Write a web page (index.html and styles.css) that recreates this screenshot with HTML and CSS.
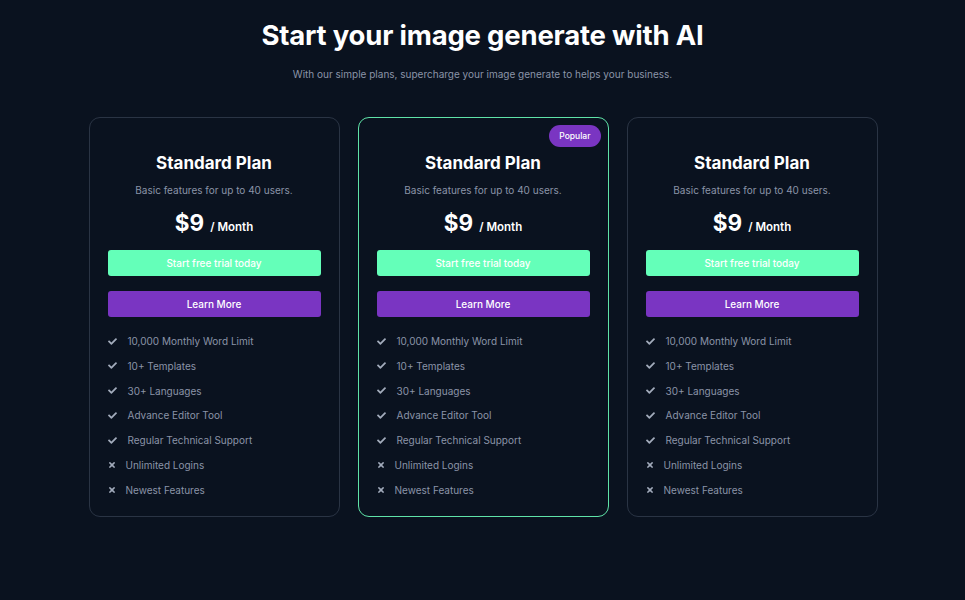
FILE: index.html
```html
<!DOCTYPE html>
<html lang="en">
<head>
<meta charset="utf-8">
<link rel="stylesheet" href="styles.css">
</head>
<body>
<section class="pricing">
  <h1 class="title">Start your image generate with AI</h1>
  <p class="subtitle">With our simple plans, supercharge your image generate to helps your business.</p>
  <div class="cards">
    <div class="card">
      <h2 class="plan">Standard Plan</h2>
      <p class="desc">Basic features for up to 40 users.</p>
      <div class="price"><span class="amount">$9</span><span class="per">/ Month</span></div>
      <button class="btn btn-trial">Start free trial today</button>
      <button class="btn btn-learn">Learn More</button>
      <ul class="features">
        <li class="yes"><svg viewBox="0 72 512 370"><path d="M173.9 439.4l-166.4-166.4c-10-10-10-26.2 0-36.2l36.2-36.2c10-10 26.2-10 36.2 0L192 312.7 432.1 72.6c10-10 26.2-10 36.2 0l36.2 36.2c10 10 10 26.2 0 36.2l-294.4 294.4c-10 10-26.2 10-36.2 0z"/></svg>10,000 Monthly Word Limit</li>
        <li class="yes"><svg viewBox="0 72 512 370"><path d="M173.9 439.4l-166.4-166.4c-10-10-10-26.2 0-36.2l36.2-36.2c10-10 26.2-10 36.2 0L192 312.7 432.1 72.6c10-10 26.2-10 36.2 0l36.2 36.2c10 10 10 26.2 0 36.2l-294.4 294.4c-10 10-26.2 10-36.2 0z"/></svg>10+ Templates</li>
        <li class="yes"><svg viewBox="0 72 512 370"><path d="M173.9 439.4l-166.4-166.4c-10-10-10-26.2 0-36.2l36.2-36.2c10-10 26.2-10 36.2 0L192 312.7 432.1 72.6c10-10 26.2-10 36.2 0l36.2 36.2c10 10 10 26.2 0 36.2l-294.4 294.4c-10 10-26.2 10-36.2 0z"/></svg>30+ Languages</li>
        <li class="yes"><svg viewBox="0 72 512 370"><path d="M173.9 439.4l-166.4-166.4c-10-10-10-26.2 0-36.2l36.2-36.2c10-10 26.2-10 36.2 0L192 312.7 432.1 72.6c10-10 26.2-10 36.2 0l36.2 36.2c10 10 10 26.2 0 36.2l-294.4 294.4c-10 10-26.2 10-36.2 0z"/></svg>Advance Editor Tool</li>
        <li class="yes"><svg viewBox="0 72 512 370"><path d="M173.9 439.4l-166.4-166.4c-10-10-10-26.2 0-36.2l36.2-36.2c10-10 26.2-10 36.2 0L192 312.7 432.1 72.6c10-10 26.2-10 36.2 0l36.2 36.2c10 10 10 26.2 0 36.2l-294.4 294.4c-10 10-26.2 10-36.2 0z"/></svg>Regular Technical Support</li>
        <li class="no"><svg viewBox="0 80 352 352"><path d="M242.7 256l100.1-100.1c12.3-12.3 12.3-32.2 0-44.5l-22.2-22.2c-12.3-12.3-32.2-12.3-44.5 0L176 189.3 75.9 89.2c-12.3-12.3-32.2-12.3-44.5 0L9.2 111.5c-12.3 12.3-12.3 32.2 0 44.5L109.3 256 9.2 356.1c-12.3 12.3-12.3 32.2 0 44.5l22.2 22.2c12.3 12.3 32.2 12.3 44.5 0L176 322.7l100.1 100.1c12.3 12.3 32.2 12.3 44.5 0l22.2-22.2c12.3-12.3 12.3-32.2 0-44.5L242.7 256z"/></svg>Unlimited Logins</li>
        <li class="no"><svg viewBox="0 80 352 352"><path d="M242.7 256l100.1-100.1c12.3-12.3 12.3-32.2 0-44.5l-22.2-22.2c-12.3-12.3-32.2-12.3-44.5 0L176 189.3 75.9 89.2c-12.3-12.3-32.2-12.3-44.5 0L9.2 111.5c-12.3 12.3-12.3 32.2 0 44.5L109.3 256 9.2 356.1c-12.3 12.3-12.3 32.2 0 44.5l22.2 22.2c12.3 12.3 32.2 12.3 44.5 0L176 322.7l100.1 100.1c12.3 12.3 32.2 12.3 44.5 0l22.2-22.2c12.3-12.3 12.3-32.2 0-44.5L242.7 256z"/></svg>Newest Features</li>
      </ul>
    </div>
    <div class="card card-popular">
      <span class="badge">Popular</span>
      <h2 class="plan">Standard Plan</h2>
      <p class="desc">Basic features for up to 40 users.</p>
      <div class="price"><span class="amount">$9</span><span class="per">/ Month</span></div>
      <button class="btn btn-trial">Start free trial today</button>
      <button class="btn btn-learn">Learn More</button>
      <ul class="features">
        <li class="yes"><svg viewBox="0 72 512 370"><path d="M173.9 439.4l-166.4-166.4c-10-10-10-26.2 0-36.2l36.2-36.2c10-10 26.2-10 36.2 0L192 312.7 432.1 72.6c10-10 26.2-10 36.2 0l36.2 36.2c10 10 10 26.2 0 36.2l-294.4 294.4c-10 10-26.2 10-36.2 0z"/></svg>10,000 Monthly Word Limit</li>
        <li class="yes"><svg viewBox="0 72 512 370"><path d="M173.9 439.4l-166.4-166.4c-10-10-10-26.2 0-36.2l36.2-36.2c10-10 26.2-10 36.2 0L192 312.7 432.1 72.6c10-10 26.2-10 36.2 0l36.2 36.2c10 10 10 26.2 0 36.2l-294.4 294.4c-10 10-26.2 10-36.2 0z"/></svg>10+ Templates</li>
        <li class="yes"><svg viewBox="0 72 512 370"><path d="M173.9 439.4l-166.4-166.4c-10-10-10-26.2 0-36.2l36.2-36.2c10-10 26.2-10 36.2 0L192 312.7 432.1 72.6c10-10 26.2-10 36.2 0l36.2 36.2c10 10 10 26.2 0 36.2l-294.4 294.4c-10 10-26.2 10-36.2 0z"/></svg>30+ Languages</li>
        <li class="yes"><svg viewBox="0 72 512 370"><path d="M173.9 439.4l-166.4-166.4c-10-10-10-26.2 0-36.2l36.2-36.2c10-10 26.2-10 36.2 0L192 312.7 432.1 72.6c10-10 26.2-10 36.2 0l36.2 36.2c10 10 10 26.2 0 36.2l-294.4 294.4c-10 10-26.2 10-36.2 0z"/></svg>Advance Editor Tool</li>
        <li class="yes"><svg viewBox="0 72 512 370"><path d="M173.9 439.4l-166.4-166.4c-10-10-10-26.2 0-36.2l36.2-36.2c10-10 26.2-10 36.2 0L192 312.7 432.1 72.6c10-10 26.2-10 36.2 0l36.2 36.2c10 10 10 26.2 0 36.2l-294.4 294.4c-10 10-26.2 10-36.2 0z"/></svg>Regular Technical Support</li>
        <li class="no"><svg viewBox="0 80 352 352"><path d="M242.7 256l100.1-100.1c12.3-12.3 12.3-32.2 0-44.5l-22.2-22.2c-12.3-12.3-32.2-12.3-44.5 0L176 189.3 75.9 89.2c-12.3-12.3-32.2-12.3-44.5 0L9.2 111.5c-12.3 12.3-12.3 32.2 0 44.5L109.3 256 9.2 356.1c-12.3 12.3-12.3 32.2 0 44.5l22.2 22.2c12.3 12.3 32.2 12.3 44.5 0L176 322.7l100.1 100.1c12.3 12.3 32.2 12.3 44.5 0l22.2-22.2c12.3-12.3 12.3-32.2 0-44.5L242.7 256z"/></svg>Unlimited Logins</li>
        <li class="no"><svg viewBox="0 80 352 352"><path d="M242.7 256l100.1-100.1c12.3-12.3 12.3-32.2 0-44.5l-22.2-22.2c-12.3-12.3-32.2-12.3-44.5 0L176 189.3 75.9 89.2c-12.3-12.3-32.2-12.3-44.5 0L9.2 111.5c-12.3 12.3-12.3 32.2 0 44.5L109.3 256 9.2 356.1c-12.3 12.3-12.3 32.2 0 44.5l22.2 22.2c12.3 12.3 32.2 12.3 44.5 0L176 322.7l100.1 100.1c12.3 12.3 32.2 12.3 44.5 0l22.2-22.2c12.3-12.3 12.3-32.2 0-44.5L242.7 256z"/></svg>Newest Features</li>
      </ul>
    </div>
    <div class="card">
      <h2 class="plan">Standard Plan</h2>
      <p class="desc">Basic features for up to 40 users.</p>
      <div class="price"><span class="amount">$9</span><span class="per">/ Month</span></div>
      <button class="btn btn-trial">Start free trial today</button>
      <button class="btn btn-learn">Learn More</button>
      <ul class="features">
        <li class="yes"><svg viewBox="0 72 512 370"><path d="M173.9 439.4l-166.4-166.4c-10-10-10-26.2 0-36.2l36.2-36.2c10-10 26.2-10 36.2 0L192 312.7 432.1 72.6c10-10 26.2-10 36.2 0l36.2 36.2c10 10 10 26.2 0 36.2l-294.4 294.4c-10 10-26.2 10-36.2 0z"/></svg>10,000 Monthly Word Limit</li>
        <li class="yes"><svg viewBox="0 72 512 370"><path d="M173.9 439.4l-166.4-166.4c-10-10-10-26.2 0-36.2l36.2-36.2c10-10 26.2-10 36.2 0L192 312.7 432.1 72.6c10-10 26.2-10 36.2 0l36.2 36.2c10 10 10 26.2 0 36.2l-294.4 294.4c-10 10-26.2 10-36.2 0z"/></svg>10+ Templates</li>
        <li class="yes"><svg viewBox="0 72 512 370"><path d="M173.9 439.4l-166.4-166.4c-10-10-10-26.2 0-36.2l36.2-36.2c10-10 26.2-10 36.2 0L192 312.7 432.1 72.6c10-10 26.2-10 36.2 0l36.2 36.2c10 10 10 26.2 0 36.2l-294.4 294.4c-10 10-26.2 10-36.2 0z"/></svg>30+ Languages</li>
        <li class="yes"><svg viewBox="0 72 512 370"><path d="M173.9 439.4l-166.4-166.4c-10-10-10-26.2 0-36.2l36.2-36.2c10-10 26.2-10 36.2 0L192 312.7 432.1 72.6c10-10 26.2-10 36.2 0l36.2 36.2c10 10 10 26.2 0 36.2l-294.4 294.4c-10 10-26.2 10-36.2 0z"/></svg>Advance Editor Tool</li>
        <li class="yes"><svg viewBox="0 72 512 370"><path d="M173.9 439.4l-166.4-166.4c-10-10-10-26.2 0-36.2l36.2-36.2c10-10 26.2-10 36.2 0L192 312.7 432.1 72.6c10-10 26.2-10 36.2 0l36.2 36.2c10 10 10 26.2 0 36.2l-294.4 294.4c-10 10-26.2 10-36.2 0z"/></svg>Regular Technical Support</li>
        <li class="no"><svg viewBox="0 80 352 352"><path d="M242.7 256l100.1-100.1c12.3-12.3 12.3-32.2 0-44.5l-22.2-22.2c-12.3-12.3-32.2-12.3-44.5 0L176 189.3 75.9 89.2c-12.3-12.3-32.2-12.3-44.5 0L9.2 111.5c-12.3 12.3-12.3 32.2 0 44.5L109.3 256 9.2 356.1c-12.3 12.3-12.3 32.2 0 44.5l22.2 22.2c12.3 12.3 32.2 12.3 44.5 0L176 322.7l100.1 100.1c12.3 12.3 32.2 12.3 44.5 0l22.2-22.2c12.3-12.3 12.3-32.2 0-44.5L242.7 256z"/></svg>Unlimited Logins</li>
        <li class="no"><svg viewBox="0 80 352 352"><path d="M242.7 256l100.1-100.1c12.3-12.3 12.3-32.2 0-44.5l-22.2-22.2c-12.3-12.3-32.2-12.3-44.5 0L176 189.3 75.9 89.2c-12.3-12.3-32.2-12.3-44.5 0L9.2 111.5c-12.3 12.3-12.3 32.2 0 44.5L109.3 256 9.2 356.1c-12.3 12.3-12.3 32.2 0 44.5l22.2 22.2c12.3 12.3 32.2 12.3 44.5 0L176 322.7l100.1 100.1c12.3 12.3 32.2 12.3 44.5 0l22.2-22.2c12.3-12.3 12.3-32.2 0-44.5L242.7 256z"/></svg>Newest Features</li>
      </ul>
    </div>
  </div>
</section>
</body>
</html>
```
FILE: styles.css
```css
* { box-sizing: border-box; }
html, body {
  margin: 0;
  background: #0a121f;
  font-family: Inter, "Noto Sans", sans-serif;
}
.pricing {
  display: flex;
  flex-direction: column;
  align-items: center;
  padding-top: 17px;
}
.title {
  margin: 0;
  color: #ffffff;
  font-size: 27.5px;
  font-weight: 700;
  line-height: 36px;
  letter-spacing: -0.2px;
}
.subtitle {
  margin: 13px 0 0;
  color: #8a94a8;
  font-size: 10px;
  line-height: 16px;
}
.cards {
  display: flex;
  gap: 18px;
  margin-top: 35px;
  padding-left: 1px;
}
.card {
  position: relative;
  width: 251px;
  height: 400px;
  border: 1px solid #2a3444;
  border-radius: 11px;
  padding: 34px 18px 0;
  display: flex;
  flex-direction: column;
  align-items: center;
}
.card-popular {
  border-color: #5fe3a8;
}
.badge {
  position: absolute;
  top: 7px;
  right: 7px;
  background: #7a35c2;
  color: #ffffff;
  font-size: 8.5px;
  font-weight: 500;
  line-height: 22px;
  padding: 0 10px;
  border-radius: 11px;
}
.plan {
  margin: 0;
  color: #ffffff;
  font-size: 17px;
  font-weight: 700;
  line-height: 22px;
}
.desc {
  margin: 8px 0 0;
  color: #8a94a8;
  font-size: 10px;
  line-height: 16px;
}
.price {
  margin-top: 8px;
  display: flex;
  align-items: baseline;
  gap: 6px;
  color: #ffffff;
}
.amount {
  font-size: 22.5px;
  font-weight: 700;
  line-height: 34px;
}
.per {
  font-size: 11.5px;
  font-weight: 600;
}
.btn {
  width: 100%;
  height: 26px;
  border: 0;
  border-radius: 3px;
  font-family: inherit;
  font-size: 10px;
  font-weight: 500;
  color: #ffffff;
  padding: 0;
}
.btn-trial {
  margin-top: 10px;
  background: #64ffb9;
}
.btn-learn {
  margin-top: 15px;
  background: #7a35c2;
}
.features {
  list-style: none;
  margin: 16px 0 0;
  padding: 0;
  align-self: stretch;
  display: flex;
  flex-direction: column;
  gap: 8.8px;
}
.features li {
  display: flex;
  align-items: center;
  color: #8a94a8;
  font-size: 10px;
  line-height: 16px;
}
.features svg {
  fill: #a2abbb;
  flex: none;
}
.features li.yes svg {
  width: 9px;
  height: 7px;
  margin-right: 11px;
}
.features li.no svg {
  width: 6px;
  height: 6px;
  margin: 0 11px 0 1px;
}
```
